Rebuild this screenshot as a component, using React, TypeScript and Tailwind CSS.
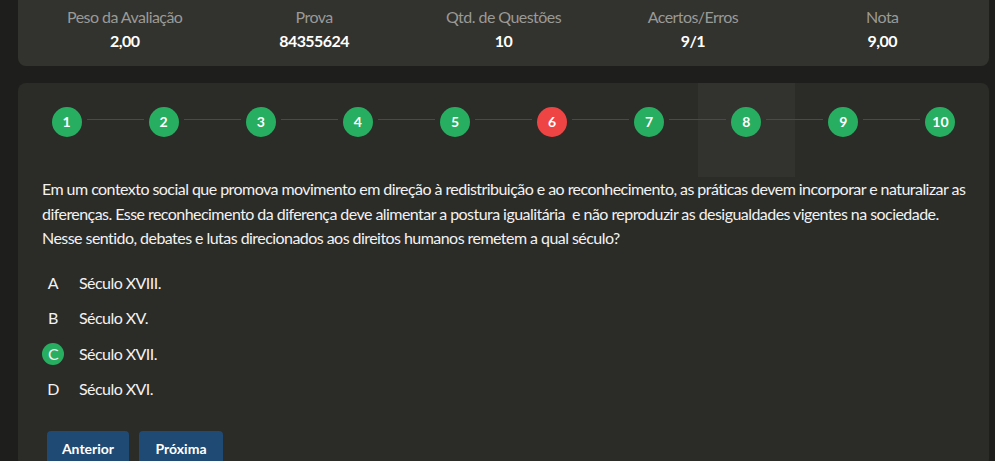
import React from 'react';

const STATS = [
  { label: 'Peso da Avaliação', value: '2,00' },
  { label: 'Prova', value: '84355624' },
  { label: 'Qtd. de Questões', value: '10' },
  { label: 'Acertos/Erros', value: '9/1' },
  { label: 'Nota', value: '9,00' },
];

const STEPS = [1, 2, 3, 4, 5, 6, 7, 8, 9, 10];
const WRONG = 6;
const CURRENT = 8;

const OPTIONS = [
  { letter: 'A', text: 'Século XVIII.' },
  { letter: 'B', text: 'Século XV.' },
  { letter: 'C', text: 'Século XVII.', correct: true },
  { letter: 'D', text: 'Século XVI.' },
];

export default function App() {
  return (
    <div
      className="h-[461px] bg-[#1e1e1d] pl-[18px] pr-[6px] overflow-hidden tracking-[-0.55px]"
      style={{ fontFamily: 'Lato, "Liberation Sans", sans-serif' }}
    >
      <div className="bg-[#32322e] rounded-b-lg pt-[5px] pb-[13px] px-3 grid grid-cols-5 text-center">
        {STATS.map(({ label, value }) => (
          <div key={label}>
            <div className="text-[#9a9a96] text-base leading-6">{label}</div>
            <div className="text-white text-base font-bold leading-6">{value}</div>
          </div>
        ))}
      </div>

      <div className="mt-[17px] bg-[#2b2b28] rounded-lg">
        <div className="grid grid-cols-10 h-[94px]">
          {STEPS.map((n, i) => (
            <div
              key={n}
              className={`relative flex justify-center pt-[24px] ${n === CURRENT ? 'bg-[#32322f]' : ''}`}
            >
              {i > 0 && (
                <div className="absolute left-0 top-[36px] w-[calc(50%-20px)] h-px bg-[#4a4a46]" />
              )}
              {i < STEPS.length - 1 && (
                <div className="absolute right-0 top-[36px] w-[calc(50%-20px)] h-px bg-[#4a4a46]" />
              )}
              <div
                className={`w-[30px] h-[30px] rounded-full flex items-center justify-center text-white text-sm font-bold tracking-normal ${
                  n === WRONG ? 'bg-[#ef4444]' : 'bg-[#27ae60]'
                }`}
              >
                {n}
              </div>
            </div>
          ))}
        </div>

        <div className="px-6">
          <p className="text-[#f2f2f2] text-base leading-[24.5px] whitespace-nowrap">
            Em um contexto social que promova movimento em direção à redistribuição e ao reconhecimento, as práticas devem incorporar e naturalizar as
            <br />
            diferenças. Esse reconhecimento da diferença deve alimentar a postura igualitária&nbsp; e não reproduzir as desigualdades vigentes na sociedade.
            <br />
            Nesse sentido, debates e lutas direcionados aos direitos humanos remetem a qual século?
          </p>

          <div className="mt-[21px] flex flex-col gap-[13.5px]">
            {OPTIONS.map(({ letter, text, correct }) => (
              <div key={letter} className="flex items-center h-[22px] text-[#f2f2f2] text-base">
                <div
                  className={`w-[22px] h-[22px] rounded-full flex items-center justify-center ${
                    correct ? 'bg-[#27ae60]' : ''
                  }`}
                >
                  {letter}
                </div>
                <span className="ml-[15px]">{text}</span>
              </div>
            ))}
          </div>

          <div className="mt-[31px] flex gap-[10px] pl-[5px]">
            <button className="bg-[#1f4a73] text-white text-sm font-bold rounded-t w-[82px] h-[36px] tracking-normal">Anterior</button>
            <button className="bg-[#1f4a73] text-white text-sm font-bold rounded-t w-[84px] h-[36px] tracking-normal">Próxima</button>
          </div>
        </div>
      </div>
    </div>
  );
}
